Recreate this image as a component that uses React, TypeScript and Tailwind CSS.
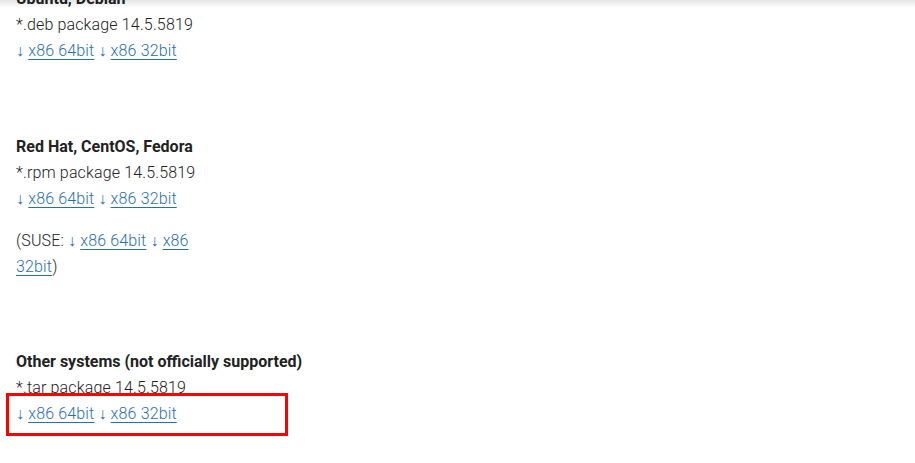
import React from "react";

function Links() {
  return (
    <>
      <span className="text-[#2a6fad]">↓ </span>
      <a href="#" className="text-[#2a6fad] underline underline-offset-[3px]">x86 64bit</a>
      <span className="text-[#2a6fad]"> ↓ </span>
      <a href="#" className="text-[#2a6fad] underline underline-offset-[3px]">x86 32bit</a>
    </>
  );
}

function H({ children }: { children: React.ReactNode }) {
  return <div className="font-bold whitespace-nowrap tracking-normal">{children}</div>;
}

export default function App() {
  return (
    <div
      className="relative w-[915px] h-[463px] overflow-hidden bg-white text-[#222] text-[16px] leading-[26px] font-light tracking-[0.15px]"
      style={{ fontFamily: "Roboto, 'Liberation Sans', sans-serif" }}
    >
      <div className="pointer-events-none absolute left-0 right-0 top-0 h-[8px] bg-gradient-to-b from-black/10 to-transparent z-10" />
      <div className="pl-4 -mt-[14px]">
        <div>
          <H>Ubuntu, Debian</H>
          <div>*.deb package 14.5.5819</div>
          <div><Links /></div>
        </div>
        <div className="mt-[70px]">
          <H>Red Hat, CentOS, Fedora</H>
          <div>*.rpm package 14.5.5819</div>
          <div><Links /></div>
          <p className="mt-4 w-[200px]">
            (SUSE: <span className="text-[#2a6fad]">↓ </span>
            <a href="#" className="text-[#2a6fad] underline underline-offset-[3px]">x86 64bit</a>
            <span className="text-[#2a6fad]"> ↓ </span>
            <a href="#" className="text-[#2a6fad] underline underline-offset-[3px]">x86 32bit</a>)
          </p>
        </div>
        <div className="mt-[69px]">
          <H>Other systems (not officially supported)</H>
          <div>*.tar package 14.5.5819</div>
          <div><Links /></div>
        </div>
      </div>
      <div className="absolute left-[6px] top-[393px] w-[282px] h-[43px] border-[3px] border-[#ff0000]" />
    </div>
  );
}
